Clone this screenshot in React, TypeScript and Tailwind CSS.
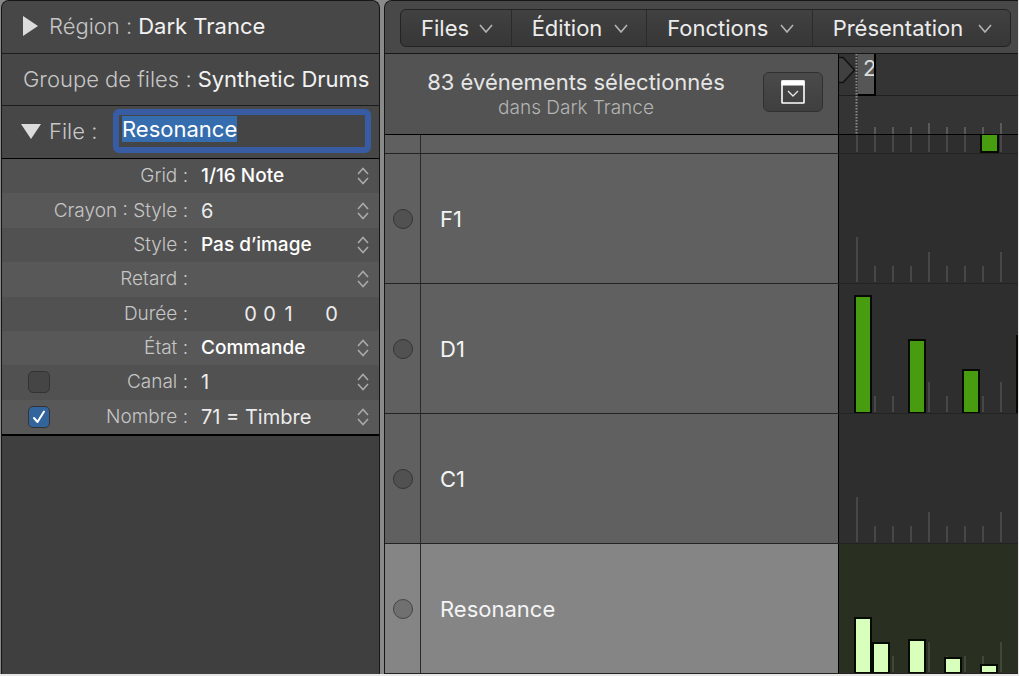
import { useEffect, useRef, useState } from "react";
import type { ReactNode } from "react";

type Bar = { x: number; h: number };

type Lane = {
  name: string;
  selected?: boolean;
  bars: Bar[];
};

const LANES: Lane[] = [
  { name: "F1", bars: [] },
  {
    name: "D1",
    bars: [
      { x: 15, h: 118 },
      { x: 69, h: 74 },
      { x: 123, h: 44 },
      { x: 177, h: 78 },
    ],
  },
  { name: "C1", bars: [] },
  {
    name: "Resonance",
    selected: true,
    bars: [
      { x: 15, h: 56 },
      { x: 33, h: 31 },
      { x: 69, h: 34 },
      { x: 105, h: 16 },
      { x: 141, h: 9 },
    ],
  },
];

const TICKS = Array.from({ length: 9 }, (_, i) => i);

function tickHeight(i: number) {
  if (i % 16 === 0) return 46;
  return i % 4 === 0 ? 31 : 17;
}

function LaneGraph({ lane }: { lane: Lane }) {
  return (
    <svg className="block h-full w-full" aria-hidden="true">
      <svg y="100%" overflow="visible">
        {TICKS.map((i) => (
          <rect
            key={i}
            x={17 + i * 18}
            y={-tickHeight(i)}
            width="2"
            height={tickHeight(i) - 1}
            fill={lane.selected ? "#3e4838" : "#474747"}
          />
        ))}
        {lane.bars.map((b) => (
          <rect
            key={b.x}
            x={b.x + 1}
            y={-b.h + 1}
            width="16"
            height={b.h - 1}
            fill={lane.selected ? "#d9ffbd" : "#479c0f"}
            stroke="#050a03"
            strokeWidth="2"
          />
        ))}
      </svg>
    </svg>
  );
}

function Chevron() {
  return (
    <svg width="14" height="9" viewBox="0 0 14 9" fill="none" aria-hidden="true">
      <path d="M1 1 L7 8 L13 1" stroke="#b4b4b4" strokeWidth="1.6" />
    </svg>
  );
}

function Stepper() {
  return (
    <svg
      className="pointer-events-none shrink-0"
      width="12"
      height="18"
      viewBox="0 0 12 18"
      fill="none"
      aria-hidden="true"
    >
      <path d="M1 7 L6 1.5 L11 7 M1 11 L6 16.5 L11 11" stroke="#aaaaaa" strokeWidth="1.6" />
    </svg>
  );
}

function Param({
  id,
  label,
  check,
  stepper = true,
  children,
}: {
  id: string;
  label: string;
  check?: ReactNode;
  stepper?: boolean;
  children: ReactNode;
}) {
  return (
    <div className="flex items-center pr-2.5 odd:bg-[#515151] even:bg-[#585858]">
      <div className="flex w-12 shrink-0 justify-end">{check}</div>
      <label htmlFor={id} className="w-[138px] shrink-0 text-right text-[19px] leading-6 font-light whitespace-nowrap text-[#c6c6c6]">
        {label}
      </label>
      <div className="ml-[13px] flex min-w-0 flex-1 items-center">{children}</div>
      {stepper && <Stepper />}
    </div>
  );
}

function Picker({ id, value, bold = false }: { id: string; value: string; bold?: boolean }) {
  return (
    <select
      id={id}
      defaultValue={value}
      className={
        bold
          ? "w-full appearance-none bg-transparent text-[19px] leading-6 font-medium text-white outline-none"
          : "w-full appearance-none bg-transparent text-[20px] leading-6 font-normal text-[#ececec] outline-none"
      }
    >
      <option value={value}>{value}</option>
    </select>
  );
}

function Tick({ label, initial }: { label: string; initial: boolean }) {
  const [on, setOn] = useState(initial);
  return (
    <span className="grid size-[22px] place-items-center">
      <input
        type="checkbox"
        aria-label={label}
        checked={on}
        onChange={(e) => setOn(e.target.checked)}
        className="col-start-1 row-start-1 size-[22px] appearance-none rounded-[5px] border border-[#333] bg-[#454545] checked:bg-[#33659d]"
      />
      {on && (
        <svg className="pointer-events-none col-start-1 row-start-1" width="14" height="14" viewBox="0 0 14 14" fill="none" aria-hidden="true">
          <path d="M2 8 L5.5 12 L12 1.5" stroke="#fff" strokeWidth="2" strokeLinecap="round" strokeLinejoin="round" />
        </svg>
      )}
    </span>
  );
}

function Inspector() {
  const nameRef = useRef<HTMLInputElement>(null);
  useEffect(() => {
    nameRef.current?.focus();
    nameRef.current?.select();
  }, []);

  return (
    <aside className="flex w-[379px] shrink-0 flex-col overflow-hidden rounded-t-lg border-x border-t border-[#161616] bg-[#3f3f3f]">
      <div className="flex h-[53px] items-center border-b border-[#1c1c1c] bg-[#474747] pb-0.5 pl-[21px] whitespace-nowrap">
        <button type="button" aria-label="Région" className="mr-[11px]">
          <svg width="15" height="20" viewBox="0 0 15 20" aria-hidden="true">
            <path d="M0 0 L15 10 L0 20 Z" fill="#dcdcdc" />
          </svg>
        </button>
        <span className="text-[22px] leading-7 font-light text-[#c6c6c6]">Région :</span>
        <span className="ml-1.5 text-[22px] leading-7 text-[#f2f2f2]">Dark Trance</span>
      </div>
      <div className="flex h-[52px] items-center border-b border-[#1c1c1c] bg-[#474747] pb-0.5 pl-[21px] whitespace-nowrap">
        <span className="text-[22px] leading-7 font-light text-[#c6c6c6]">Groupe de files :</span>
        <span className="ml-1.5 text-[22px] leading-7 text-[#f2f2f2]">Synthetic Drums</span>
      </div>
      <div className="flex h-[53px] items-center border-b border-black bg-[#474747] pr-2 pb-0.5 pl-[19px]">
        <button type="button" aria-label="Détails de la file" className="mr-2">
          <svg width="20" height="15" viewBox="0 0 20 15" aria-hidden="true">
            <path d="M0 0 L20 0 L10 15 Z" fill="#dcdcdc" />
          </svg>
        </button>
        <label htmlFor="file-name" className="w-16 text-[22px] leading-7 font-light text-[#c6c6c6]">
          File :
        </label>
        <input
          id="file-name"
          ref={nameRef}
          type="text"
          defaultValue="Resonance"
          className="h-11 min-w-0 flex-1 rounded-md border-6 border-[#385ca4] bg-[#454545] pr-1 pb-1 pl-[3px] text-[22px] leading-7 text-[#f2f2f2] caret-transparent outline-none selection:bg-[#356dae] selection:text-white"
        />
      </div>
      <div className="grid h-[277px] grid-rows-8 border-b-2 border-black">
        <Param id="grid" label="Grid :">
          <Picker id="grid" value="1/16 Note" bold />
        </Param>
        <Param id="pencil" label="Crayon : Style :">
          <Picker id="pencil" value="6" />
        </Param>
        <Param id="style" label="Style :">
          <Picker id="style" value="Pas d’image" bold />
        </Param>
        <Param id="delay" label="Retard :">
          <Picker id="delay" value="" />
        </Param>
        <Param id="duration" label="Durée :" stepper={false}>
          <input id="duration" defaultValue="0" className="ml-10 w-[19px] bg-transparent text-center text-[20px] leading-6 text-[#ececec] outline-none" />
          <input aria-label="Temps" defaultValue="0" className="w-[19px] bg-transparent text-center text-[20px] leading-6 text-[#ececec] outline-none" />
          <input aria-label="Division" defaultValue="1" className="w-[19px] bg-transparent text-center text-[20px] leading-6 text-[#ececec] outline-none" />
          <input aria-label="Tic" defaultValue="0" className="ml-6 w-[19px] bg-transparent text-center text-[20px] leading-6 text-[#ececec] outline-none" />
        </Param>
        <Param id="status" label="État :">
          <Picker id="status" value="Commande" bold />
        </Param>
        <Param id="channel" label="Canal :" check={<Tick label="Activer le canal" initial={false} />}>
          <Picker id="channel" value="1" />
        </Param>
        <Param id="number" label="Nombre :" check={<Tick label="Activer le nombre" initial />}>
          <Picker id="number" value="71 = Timbre" />
        </Param>
      </div>
    </aside>
  );
}

function Ruler() {
  return (
    <div className="relative min-w-0 overflow-hidden bg-[#343434]">
      <svg className="block h-full w-full" aria-hidden="true">
        <rect x="0" y="41" width="100%" height="1" fill="#1f1f1f" />
        {TICKS.slice(1).map((i) => (
          <rect key={i} x={17 + i * 18} y={i % 4 === 0 ? 69 : 73} width="2" height="20" fill="#5a5a5a" />
        ))}
        <path d="M0 3.5 H4 L15.5 16 L4 28.5 H0" fill="#404040" stroke="#111" strokeWidth="1.5" />
        <line x1="17.5" y1="0" x2="17.5" y2="80" stroke="#8a8a8a" strokeWidth="2" strokeDasharray="1.5 1.5" />
      </svg>
      <span className="absolute top-0 left-[19px] h-[42px] w-[18px] overflow-hidden border-r-2 border-b-2 border-black bg-[#565656] pl-[5px] text-[22px] leading-7 text-[#dcdcdc]">
        2
      </span>
    </div>
  );
}

const ROW = "grid grid-cols-[36px_418px_minmax(0,1fr)] grid-rows-[minmax(0,1fr)]";

function StepEditor() {
  return (
    <main className="flex min-w-0 flex-1 flex-col overflow-hidden rounded-tl-lg border-t border-l border-[#161616] bg-[#4a4a4a]">
      <div className="flex h-[53px] items-center border-b border-[#161616] bg-[#484848] pt-0.5 pr-[7px] pl-[15px]">
        <nav className="grid h-[38px] flex-1 grid-cols-[111fr_136fr_166fr_198fr] divide-x divide-[#2b2b2b] rounded-md border border-[#232323] bg-linear-to-b from-[#414141] to-[#373737]">
          {["Files", "Édition", "Fonctions", "Présentation"].map((m) => (
            <button
              key={m}
              type="button"
              className="flex items-center justify-between pr-[18px] pl-5 text-[22px] leading-7 text-[#ececec]"
            >
              {m}
              <Chevron />
            </button>
          ))}
        </nav>
      </div>

      <div className="grid h-[81px] grid-cols-[454px_minmax(0,1fr)] grid-rows-[minmax(0,1fr)] border-b border-black">
        <header className="flex items-center border-r border-black bg-[#535353] pr-[15px] pl-1">
          <div className="flex-1 text-center">
            <h1 className="text-[22px] leading-7 text-[#e6e6e6]">83 événements sélectionnés</h1>
            <p className="text-[19px] leading-6 font-light text-[#b4b4b4]">dans Dark Trance</p>
          </div>
          <button
            type="button"
            aria-label="Menu des files"
            className="mb-1 grid h-10 w-[60px] place-items-center rounded-md border border-[#303030] bg-linear-to-b from-[#4a4a4a] to-[#3f3f3f]"
          >
            <svg width="24" height="24" viewBox="0 0 24 24" fill="none" aria-hidden="true">
              <rect x="1" y="1" width="22" height="22" rx="0.5" stroke="#fff" strokeWidth="1.6" />
              <rect x="0.5" y="0.5" width="23" height="5" fill="#fff" />
              <path d="M7 11 L12 16 L17 11" stroke="#e6e6e6" strokeWidth="1.4" />
            </svg>
          </button>
        </header>
        <Ruler />
      </div>

      <div className={`${ROW} h-[19px] border-b border-[#232323]`}>
        <div className="border-r border-[#2a2a2a] bg-[#606060]" />
        <div className="border-r border-black bg-[#606060]" />
        <div className="bg-[#2e2e2e]">
          <svg className="block h-full w-full" aria-hidden="true">
            {TICKS.map((i) => (
              <rect key={i} x={17 + i * 18} y="0" width="2" height="17" fill="#474747" />
            ))}
            <rect x="142" y="-2" width="17" height="19" fill="#479c0f" stroke="#050a03" strokeWidth="2" />
          </svg>
        </div>
      </div>

      {LANES.map((lane) => (
        <div key={lane.name} className={`${ROW} h-[130px] border-b border-[#232323]`}>
          <div className={lane.selected ? "grid place-items-center border-r border-[#2a2a2a] bg-[#858585]" : "grid place-items-center border-r border-[#2a2a2a] bg-[#606060]"}>
            <button
              type="button"
              aria-label={`Sélectionner ${lane.name}`}
              className={lane.selected ? "size-5 rounded-full border border-[#454545] bg-[#707070]" : "size-5 rounded-full border border-[#353535] bg-[#515151]"}
            />
          </div>
          <div className={lane.selected ? "flex items-center border-r border-black bg-[#858585] pl-[19px]" : "flex items-center border-r border-black bg-[#606060] pl-[19px]"}>
            <span className="text-[22px] leading-7 text-[#f4f4f4]">{lane.name}</span>
          </div>
          <div className={lane.selected ? "bg-[#293022]" : "bg-[#2e2e2e]"}>
            <LaneGraph lane={lane} />
          </div>
        </div>
      ))}
    </main>
  );
}

export default function App() {
  return (
    <div className="min-h-screen bg-[#e8e8e8] pr-px font-['Inter',sans-serif]">
      <div className="flex gap-1 bg-[#8a8a8a] pl-px">
        <Inspector />
        <StepEditor />
      </div>
    </div>
  );
}
